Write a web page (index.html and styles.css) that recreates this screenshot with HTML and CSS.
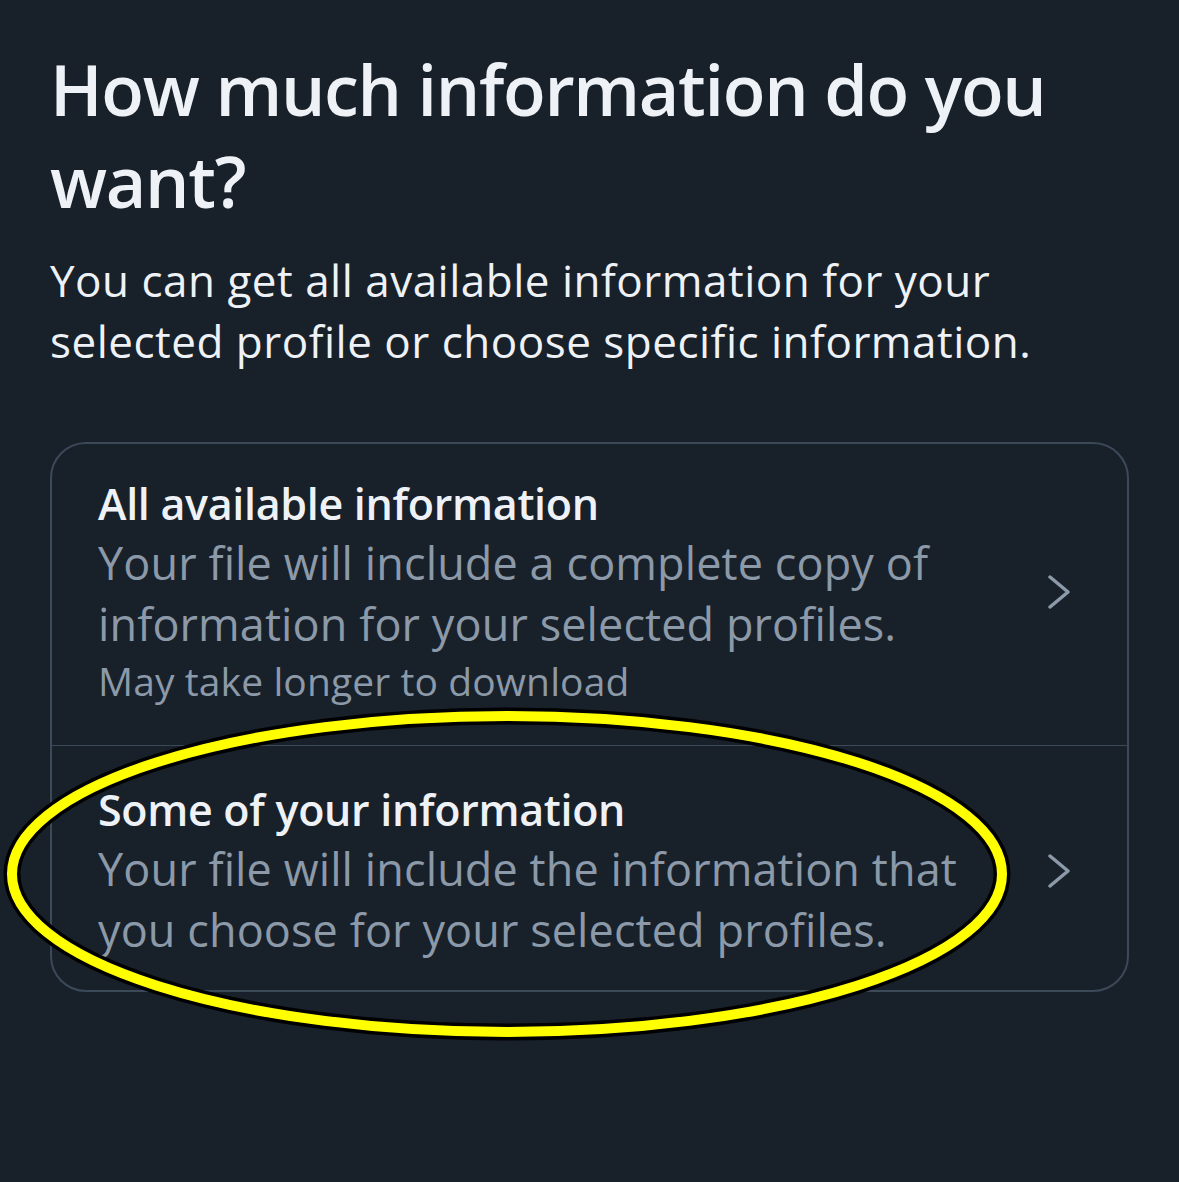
FILE: index.html
```html
<!DOCTYPE html>
<html lang="en">
<head>
    <meta charset="UTF-8">
    <meta name="viewport" content="width=device-width, initial-scale=1.0">
    <title>Download your information</title>
    <link rel="stylesheet" href="styles.css">
</head>
<body>
    <main class="page">
        <h1 class="title">How much information do you want?</h1>
        <p class="lead">You can get all available information for your selected profile or choose specific information.</p>

        <div class="options">
            <a class="option" href="#">
                <div class="option-text">
                    <h2>All available information</h2>
                    <p>Your file will include a complete copy of information for your selected profiles.</p>
                    <p class="note">May take longer to download</p>
                </div>
                <svg class="chevron" viewBox="0 0 22 34" width="22" height="34">
                    <path d="M2 2 L20 17 L2 32" />
                </svg>
            </a>
            <a class="option" href="#">
                <div class="option-text">
                    <h2>Some of your information</h2>
                    <p>Your file will include the information that you choose for your selected profiles.</p>
                </div>
                <svg class="chevron" viewBox="0 0 22 34" width="22" height="34">
                    <path d="M2 2 L20 17 L2 32" />
                </svg>
            </a>
        </div>

        <!-- marker drawn over the second option -->
        <svg class="highlight" viewBox="0 0 1179 1182" width="1179" height="1182">
            <ellipse class="ring-outline" cx="507" cy="874" rx="495" ry="158" />
            <ellipse class="ring" cx="507" cy="874" rx="495" ry="158" />
        </svg>
    </main>
</body>
</html>
```

FILE: styles.css
```css
*{
    box-sizing: border-box;
}
body{
    margin: 0;
    padding: 0;
    background: #18202a;
    font-family: 'Open Sans', 'Noto Sans', sans-serif;
}
.page{
    position: relative;
    width: 1179px;
    height: 1182px;
    padding: 43px 50px 0;
    overflow: hidden;
}
.title{
    margin: 0;
    font-size: 70px;
    font-weight: 600;
    line-height: 92px;
    color: #eef2f6;
    letter-spacing: -1.3px;
}
.lead{
    margin: 23px 0 0;
    font-size: 44px;
    line-height: 61px;
    letter-spacing: 0.5px;
    color: #eef2f6;
}
.options{
    margin-top: 70px;
    border: 2px solid #3b4958;
    border-radius: 36px;
}
.option{
    display: flex;
    align-items: center;
    padding: 35px 57px 30px 46px;
    text-decoration: none;
}
.option:first-child{
    padding-top: 31px;
    padding-bottom: 37px;
}
.option + .option{
    border-top: 1px solid #3b4958;
}
.option-text{
    flex: 1;
    padding-right: 30px;
}
.option h2{
    margin: 0;
    font-size: 43px;
    font-weight: 600;
    line-height: 57px;
    letter-spacing: -0.3px;
    color: #eef2f6;
}
.option p{
    margin: 0;
    font-size: 45px;
    line-height: 61px;
    letter-spacing: 0.1px;
    color: #8b99a8;
}
.option .note{
    font-size: 39px;
    line-height: 54px;
}
.chevron{
    flex: none;
    fill: none;
    stroke: #8b99a8;
    stroke-width: 3.5;
    stroke-linecap: round;
    stroke-linejoin: round;
}
.highlight{
    position: absolute;
    top: 0;
    left: 0;
    pointer-events: none;
}
.ring-outline{
    fill: none;
    stroke: #000;
    stroke-width: 17;
}
.ring{
    fill: none;
    stroke: #ffff00;
    stroke-width: 10;
}
```
